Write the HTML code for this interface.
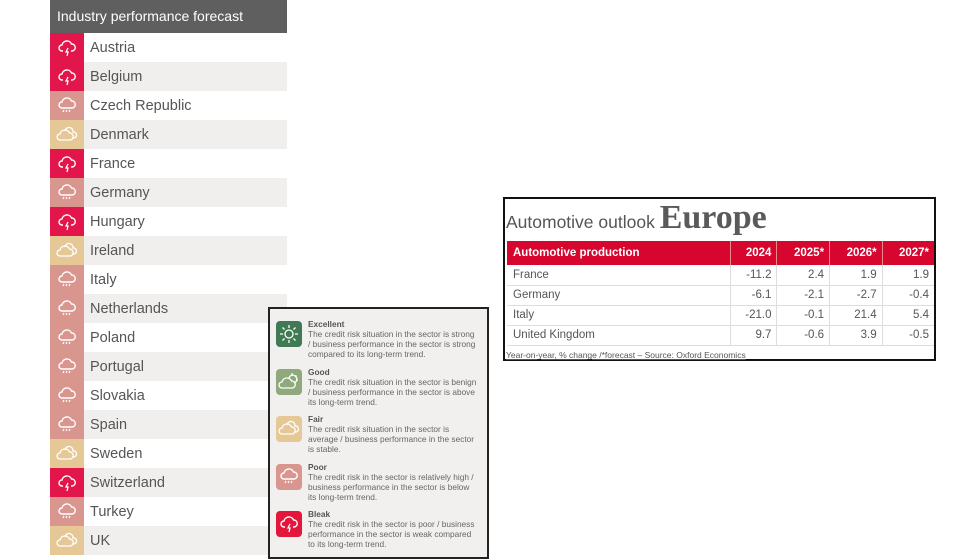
<!DOCTYPE html>
<html><head><meta charset="utf-8"><style>
*{margin:0;padding:0;box-sizing:border-box}
body{width:980px;height:560px;background:#fff;font-family:"Liberation Sans",sans-serif;position:relative;overflow:hidden;color:#555}
#lt{position:absolute;left:50px;top:0px;width:237px}
#lt .h{height:33px;background:#5f5f5f;color:#fff;font-size:14px;line-height:33px;padding-left:7px}
.r{height:29px;display:flex;align-items:center}
.r:nth-child(even){background:#f0efee}
.ic{width:34px;height:29px;display:flex;align-items:center;justify-content:center}
.r span{padding-left:6px;font-size:14.5px;color:#555}
.B{background:#e3164b}.P{background:#d8968f}.F{background:#e5c896}
#lg{position:absolute;left:268px;top:307px;width:221px;height:252px;border:2px solid #222;background:#f1f0ef}
.it{position:absolute;left:6px;width:210px}
.it .sq{position:absolute;left:0;top:6px;width:26px;height:26px;border-radius:4px;display:flex;align-items:center;justify-content:center}
.it .tx{position:absolute;left:32px;top:4px;font-size:8.3px;line-height:10px;color:#666;width:170px}
.it b{color:#555}
#rt{position:absolute;left:503px;top:197px;width:433px;height:164px;border:2px solid #111;background:#fff}
#rt .t{position:absolute;left:1px;top:0px;white-space:nowrap;color:#555}
table{position:absolute;left:2px;top:42px;border-collapse:collapse;width:427px;font-size:11.5px}
th{background:#d7062f;color:#fff;font-weight:bold;height:24px;text-align:right;padding-right:5px;border-left:1px solid #e88}
th:first-child{text-align:left;padding-left:6px;border-left:none}
td{height:20px;text-align:right;padding-right:5px;border-left:1px solid #ddd;border-bottom:1px solid #ddd;color:#555}
td:first-child{text-align:left;padding-left:6px;border-left:none}
.fn{position:absolute;left:1px;top:151px;font-size:8.5px;color:#555;text-decoration:underline}
</style></head><body>
<div id="lt"><div class="h">Industry performance forecast</div>
<div id="rows"></div></div>
<div id="lg"></div>
<div id="rt"><div class="t"><span style="font-size:17.5px">Automotive outlook </span><span style="font-family:'Liberation Serif',serif;font-size:34px;font-weight:bold;color:#5a5a5a">Europe</span></div>
<table><tr><th style="width:223px">Automotive production</th><th>2024</th><th>2025*</th><th>2026*</th><th>2027*</th></tr>
<tr><td>France</td><td>-11.2</td><td>2.4</td><td>1.9</td><td>1.9</td></tr>
<tr><td>Germany</td><td>-6.1</td><td>-2.1</td><td>-2.7</td><td>-0.4</td></tr>
<tr><td>Italy</td><td>-21.0</td><td>-0.1</td><td>21.4</td><td>5.4</td></tr>
<tr><td>United Kingdom</td><td>9.7</td><td>-0.6</td><td>3.9</td><td>-0.5</td></tr></table>
<div class="fn">Year-on-year, % change /*forecast – Source: Oxford Economics</div></div>
<script>
const I={B:'<svg width="20" height="20" viewBox="0 0 20 20"><path d="M6 13H5a3 3 0 0 1 0-6 5 5 0 0 1 9.5-1A3.5 3.5 0 0 1 15 13h-1" fill="none" stroke="#fff" stroke-width="1.4"/><path d="M11 10l-2 4h2l-1 4" fill="none" stroke="#fff" stroke-width="1.3"/></svg>',
P:'<svg width="20" height="20" viewBox="0 0 20 20"><path d="M5 12a3 3 0 0 1 0-6 5 5 0 0 1 9.5-1A3.5 3.5 0 0 1 15 12z" fill="none" stroke="#fff" stroke-width="1.4"/><path d="M7 14l-1 2M10 14l-1 2M13 14l-1 2" stroke="#fff" stroke-width="1.2"/></svg>',
F:'<svg width="22" height="18" viewBox="0 0 22 18"><path d="M4 14a3 3 0 0 1 0-6 5 5 0 0 1 9.5-1A3.5 3.5 0 0 1 14 14z" fill="none" stroke="#fff" stroke-width="1.3"/><path d="M9 5a4 4 0 0 1 8 1 3 3 0 0 1 1 6h-2" fill="none" stroke="#fff" stroke-width="1.3"/></svg>',
E:'<svg width="20" height="20" viewBox="0 0 20 20"><circle cx="10" cy="10" r="4" fill="none" stroke="#fff" stroke-width="1.3"/><path d="M10 1v3M10 16v3M1 10h3M16 10h3M3.5 3.5l2 2M14.5 14.5l2 2M3.5 16.5l2-2M14.5 5.5l2-2" stroke="#fff" stroke-width="1.3"/></svg>',
G:'<svg width="22" height="20" viewBox="0 0 22 20"><path d="M4 16a3 3 0 0 1 0-6 5 5 0 0 1 9.5-1A3.5 3.5 0 0 1 14 16z" fill="none" stroke="#fff" stroke-width="1.3"/><path d="M11 6a4 4 0 1 1 5 5M14 1v2M20 8h-2M18.5 3.5l-1.5 1.5" fill="none" stroke="#fff" stroke-width="1.3"/></svg>'};
const c=[["Austria","B"],["Belgium","B"],["Czech Republic","P"],["Denmark","F"],["France","B"],["Germany","P"],["Hungary","B"],["Ireland","F"],["Italy","P"],["Netherlands","P"],["Poland","P"],["Portugal","P"],["Slovakia","P"],["Spain","P"],["Sweden","F"],["Switzerland","B"],["Turkey","P"],["UK","F"]];
document.getElementById('rows').outerHTML='<div>'+c.map(x=>'<div class="r"><div class="ic '+x[1]+'">'+I[x[1]]+'</div><span>'+x[0]+'</span></div>').join('')+'</div>';
const L=[["E","#3f7a55","Excellent","The credit risk situation in the sector is strong / business performance in the sector is strong compared to its long-term trend."],
["G","#8fa87c","Good","The credit risk situation in the sector is benign / business performance in the sector is above its long-term trend."],
["F","#e5c896","Fair","The credit risk situation in the sector is average / business performance in the sector is stable."],
["P","#d8968f","Poor","The credit risk in the sector is relatively high / business performance in the sector is below its long-term trend."],
["B","#e3163b","Bleak","The credit risk in the sector is poor / business performance in the sector is weak compared to its long-term trend."]];
document.getElementById('lg').innerHTML=L.map((x,i)=>'<div class="it" style="top:'+(6+i*47.5)+'px"><div class="sq" style="background:'+x[1]+'">'+I[x[0]]+'</div><div class="tx"><b>'+x[2]+'</b><br>'+x[3]+'</div></div>').join('');
</script>
</body></html>
